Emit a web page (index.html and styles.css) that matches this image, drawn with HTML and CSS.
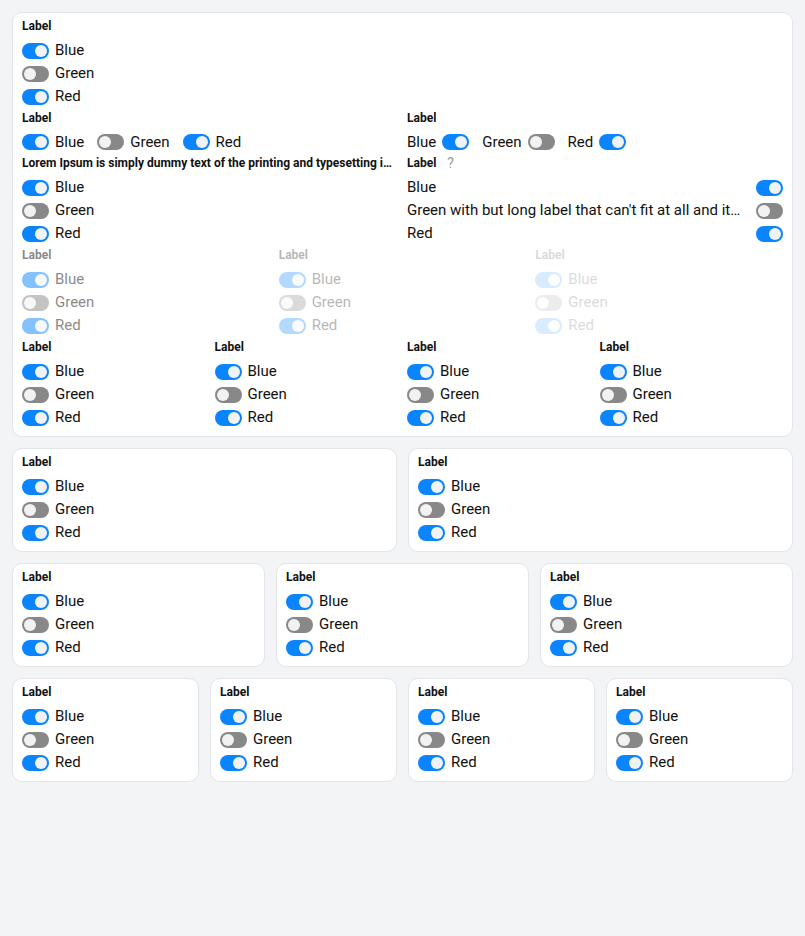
FILE: index.html
```html
<!DOCTYPE html>
<html>
<head>
<meta charset="utf-8">
<link rel="stylesheet" href="styles.css">
</head>
<body>
<div class="page">
  <div class="card">
    <div class="group">
      <div class="label">Label</div>
      <div class="opt"><span class="tg on"></span><span>Blue</span></div>
      <div class="opt"><span class="tg"></span><span>Green</span></div>
      <div class="opt"><span class="tg on"></span><span>Red</span></div>
    </div>
    <div class="cols cols2">
      <div class="group">
        <div class="label">Label</div>
        <div class="inline">
          <div class="opt"><span class="tg on"></span><span>Blue</span></div>
          <div class="opt"><span class="tg"></span><span>Green</span></div>
          <div class="opt"><span class="tg on"></span><span>Red</span></div>
        </div>
      </div>
      <div class="group">
        <div class="label">Label</div>
        <div class="inline">
          <div class="opt"><span>Blue</span><span class="tg on"></span></div>
          <div class="opt"><span>Green</span><span class="tg"></span></div>
          <div class="opt"><span>Red</span><span class="tg on"></span></div>
        </div>
      </div>
    </div>
    <div class="cols cols2">
      <div class="group">
        <div class="label trunc">Lorem Ipsum is simply dummy text of the printing and typesetting industry</div>
        <div class="opt"><span class="tg on"></span><span>Blue</span></div>
        <div class="opt"><span class="tg"></span><span>Green</span></div>
        <div class="opt"><span class="tg on"></span><span>Red</span></div>
      </div>
      <div class="group">
        <div class="label">Label <span class="help">?</span></div>
        <div class="opt spread"><span class="txt">Blue</span><span class="tg on"></span></div>
        <div class="opt spread"><span class="txt">Green with but long label that can't fit at all and it will be truncated</span><span class="tg"></span></div>
        <div class="opt spread"><span class="txt">Red</span><span class="tg on"></span></div>
      </div>
    </div>
    <div class="cols cols3">
      <div class="group dis1">
        <div class="label">Label</div>
        <div class="opt"><span class="tg on"></span><span>Blue</span></div>
        <div class="opt"><span class="tg"></span><span>Green</span></div>
        <div class="opt"><span class="tg on"></span><span>Red</span></div>
      </div>
      <div class="group dis2">
        <div class="label">Label</div>
        <div class="opt"><span class="tg on"></span><span>Blue</span></div>
        <div class="opt"><span class="tg"></span><span>Green</span></div>
        <div class="opt"><span class="tg on"></span><span>Red</span></div>
      </div>
      <div class="group dis3">
        <div class="label">Label</div>
        <div class="opt"><span class="tg on"></span><span>Blue</span></div>
        <div class="opt"><span class="tg"></span><span>Green</span></div>
        <div class="opt"><span class="tg on"></span><span>Red</span></div>
      </div>
    </div>
    <div class="cols cols4">
      <div class="group">
        <div class="label">Label</div>
        <div class="opt"><span class="tg on"></span><span>Blue</span></div>
        <div class="opt"><span class="tg"></span><span>Green</span></div>
        <div class="opt"><span class="tg on"></span><span>Red</span></div>
      </div>
      <div class="group">
        <div class="label">Label</div>
        <div class="opt"><span class="tg on"></span><span>Blue</span></div>
        <div class="opt"><span class="tg"></span><span>Green</span></div>
        <div class="opt"><span class="tg on"></span><span>Red</span></div>
      </div>
      <div class="group">
        <div class="label">Label</div>
        <div class="opt"><span class="tg on"></span><span>Blue</span></div>
        <div class="opt"><span class="tg"></span><span>Green</span></div>
        <div class="opt"><span class="tg on"></span><span>Red</span></div>
      </div>
      <div class="group">
        <div class="label">Label</div>
        <div class="opt"><span class="tg on"></span><span>Blue</span></div>
        <div class="opt"><span class="tg"></span><span>Green</span></div>
        <div class="opt"><span class="tg on"></span><span>Red</span></div>
      </div>
    </div>
  </div>

  <div class="row row2">
    <div class="card"><div class="group"><div class="label">Label</div>
      <div class="opt"><span class="tg on"></span><span>Blue</span></div>
      <div class="opt"><span class="tg"></span><span>Green</span></div>
      <div class="opt"><span class="tg on"></span><span>Red</span></div></div></div>
    <div class="card"><div class="group"><div class="label">Label</div>
      <div class="opt"><span class="tg on"></span><span>Blue</span></div>
      <div class="opt"><span class="tg"></span><span>Green</span></div>
      <div class="opt"><span class="tg on"></span><span>Red</span></div></div></div>
  </div>

  <div class="row row3">
    <div class="card"><div class="group"><div class="label">Label</div>
      <div class="opt"><span class="tg on"></span><span>Blue</span></div>
      <div class="opt"><span class="tg"></span><span>Green</span></div>
      <div class="opt"><span class="tg on"></span><span>Red</span></div></div></div>
    <div class="card"><div class="group"><div class="label">Label</div>
      <div class="opt"><span class="tg on"></span><span>Blue</span></div>
      <div class="opt"><span class="tg"></span><span>Green</span></div>
      <div class="opt"><span class="tg on"></span><span>Red</span></div></div></div>
    <div class="card"><div class="group"><div class="label">Label</div>
      <div class="opt"><span class="tg on"></span><span>Blue</span></div>
      <div class="opt"><span class="tg"></span><span>Green</span></div>
      <div class="opt"><span class="tg on"></span><span>Red</span></div></div></div>
  </div>

  <div class="row row4">
    <div class="card"><div class="group"><div class="label">Label</div>
      <div class="opt"><span class="tg on"></span><span>Blue</span></div>
      <div class="opt"><span class="tg"></span><span>Green</span></div>
      <div class="opt"><span class="tg on"></span><span>Red</span></div></div></div>
    <div class="card"><div class="group"><div class="label">Label</div>
      <div class="opt"><span class="tg on"></span><span>Blue</span></div>
      <div class="opt"><span class="tg"></span><span>Green</span></div>
      <div class="opt"><span class="tg on"></span><span>Red</span></div></div></div>
    <div class="card"><div class="group"><div class="label">Label</div>
      <div class="opt"><span class="tg on"></span><span>Blue</span></div>
      <div class="opt"><span class="tg"></span><span>Green</span></div>
      <div class="opt"><span class="tg on"></span><span>Red</span></div></div></div>
    <div class="card"><div class="group"><div class="label">Label</div>
      <div class="opt"><span class="tg on"></span><span>Blue</span></div>
      <div class="opt"><span class="tg"></span><span>Green</span></div>
      <div class="opt"><span class="tg on"></span><span>Red</span></div></div></div>
  </div>
</div>
</body>
</html>
```
FILE: styles.css
```css
* { box-sizing: border-box; }
html, body { margin: 0; padding: 0; }
body {
  background: #f3f4f6;
  font-family: Roboto, "Liberation Sans", sans-serif;
  color: #111;
  font-size: 15px;
}
.page {
  padding: 12px;
  display: flex;
  flex-direction: column;
  gap: 11px;
}
.card {
  background: #fff;
  border: 1px solid #e3e5e8;
  border-radius: 10px;
  padding: 5px 9px 7px;
  display: flex;
  flex-direction: column;
  gap: 2px;
  min-width: 0;
}
.row { display: grid; gap: 11px; }
.row2 { grid-template-columns: repeat(2, 1fr); }
.row3 { grid-template-columns: repeat(3, 1fr); }
.row4 { grid-template-columns: repeat(4, 1fr); }
.cols { display: grid; column-gap: 9px; }
.cols2 { grid-template-columns: repeat(2, minmax(0, 1fr)); }
.cols3 { grid-template-columns: repeat(3, minmax(0, 1fr)); }
.cols4 { grid-template-columns: repeat(4, minmax(0, 1fr)); }
.group { min-width: 0; }
.label {
  font-size: 12px;
  font-weight: 700;
  line-height: 16px;
  margin-bottom: 5px;
  color: #111;
  display: flex;
  align-items: center;
  gap: 11px;
}
.label.trunc {
  display: block;
  white-space: nowrap;
  overflow: hidden;
  text-overflow: ellipsis;
  padding-right: 6px;
}
.help {
  font-weight: 400;
  color: #9a9a9a;
  font-size: 14px;
}
.opt {
  display: flex;
  align-items: center;
  gap: 6px;
  height: 23px;
  line-height: 23px;
}
.inline { display: flex; gap: 13px; }
.inline .opt { height: 22px; }
.spread { justify-content: space-between; gap: 12px; }
.txt {
  white-space: nowrap;
  overflow: hidden;
  text-overflow: ellipsis;
  min-width: 0;
  padding-right: 2px;
}
.tg {
  flex: none;
  position: relative;
  width: 27px;
  height: 16px;
  border-radius: 8px;
  background: #888888;
}
.tg::after {
  content: "";
  position: absolute;
  top: 2px;
  left: 2px;
  width: 12px;
  height: 12px;
  border-radius: 50%;
  background: #f1f2f4;
}
.tg.on { background: #0a84ff; }
.tg.on::after { left: 13px; }
.dis1 { opacity: 0.5; }
.dis2 { opacity: 0.3; }
.dis3 { opacity: 0.15; }
```
